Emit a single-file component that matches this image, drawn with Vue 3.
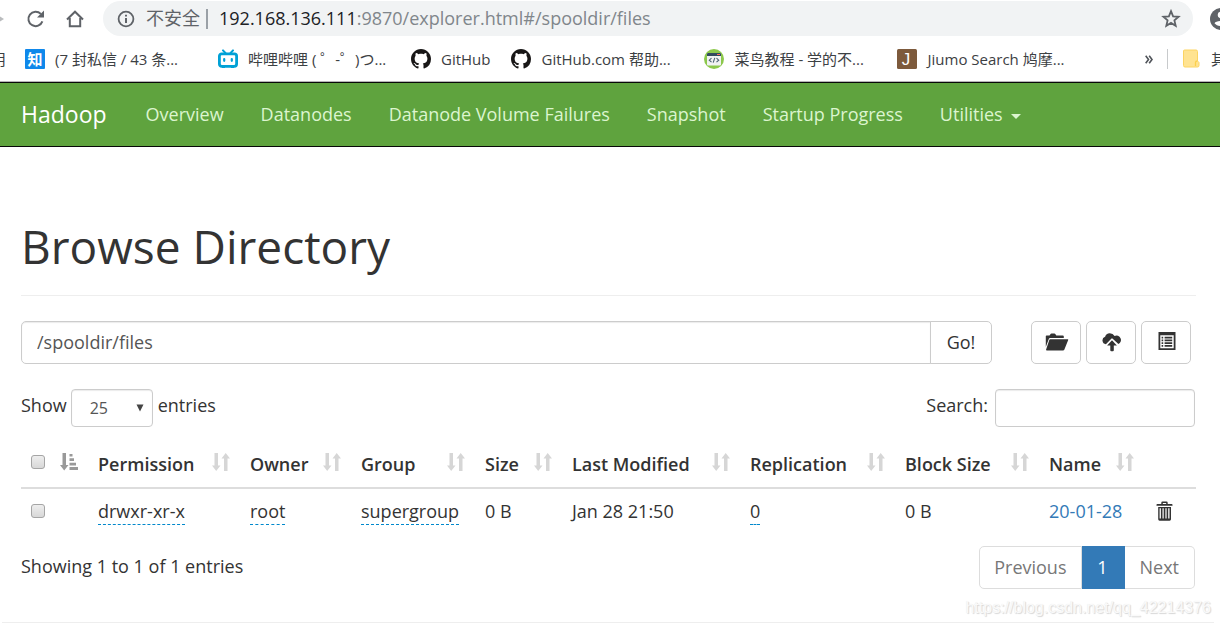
<script setup>
import { ref } from 'vue'

const bookmarks = [
  { icon: 'zhihu', label: '(7 封私信 / 43 条...', long: true },
  { icon: 'bilibili', label: '哔哩哔哩 ( ゜-゜)つ...', long: true },
  { icon: 'github', label: 'GitHub', long: false },
  { icon: 'github', label: 'GitHub.com 帮助...', long: true },
  { icon: 'runoob', label: '菜鸟教程 - 学的不...', long: true },
  { icon: 'jiumo', label: 'Jiumo Search 鸠摩...', long: true },
]
const navLinks = ['Overview', 'Datanodes', 'Datanode Volume Failures', 'Snapshot', 'Startup Progress']
const columns = ['Permission', 'Owner', 'Group', 'Size', 'Last Modified', 'Replication', 'Block Size', 'Name']
const directory = ref('/spooldir/files')
const pageSize = ref('25')
const query = ref('')
</script>

<template>
  <div class="page">
    <header class="browser">
      <div class="toolbar">
        <svg class="forward" width="5" height="16" viewBox="0 0 5 16"><path d="M-4 3 L4 8 L-4 13Z" fill="#babcbe" /></svg>
        <button class="tool reload" aria-label="Reload">
          <svg width="20" height="20" viewBox="0 0 20 20"><path d="M16.4 12.4A7.2 7.2 0 1 1 14.8 4.9" fill="none" stroke="#5f6368" stroke-width="2" /><path d="M18 1.5V8.5H11Z" fill="#5f6368" /></svg>
        </button>
        <button class="tool" aria-label="Home">
          <svg width="20" height="20" viewBox="0 0 20 20"><path d="M2 10.5 10 2.7 18 10.5M4.8 9V17.2H15.2V9" fill="none" stroke="#5f6368" stroke-width="2" /></svg>
        </button>
        <div class="omnibox">
          <svg width="18" height="18" viewBox="0 0 18 18"><circle cx="9" cy="9" r="7.4" fill="none" stroke="#5f6368" stroke-width="1.8" /><path d="M9 8V13M9 4.8V6.6" stroke="#5f6368" stroke-width="2" /></svg>
          <span class="insecure">不安全</span>
          <span class="divider"></span>
          <span class="url"><b>192.168.136.111</b>:9870/explorer.html#/spooldir/files</span>
          <button class="star" aria-label="Bookmark this page">
            <svg width="20" height="20" viewBox="0 0 20 20"><path d="M10 2.2 12.1 7.4 17.6 7.8 13.4 11.4 14.7 16.8 10 13.9 5.3 16.8 6.6 11.4 2.4 7.8 7.9 7.4Z" fill="none" stroke="#5f6368" stroke-width="1.8" /></svg>
          </button>
        </div>
        <div class="profile">
          <svg width="22" height="22" viewBox="0 0 22 22"><circle cx="11" cy="11" r="11" fill="#5f6368" /><circle cx="11" cy="7" r="3.3" fill="#fff" /><path d="M4.5 15.2C6 12.2 16 12.2 17.5 15.2 14.5 19 7.5 19 4.5 15.2Z" fill="#fff" /></svg>
        </div>
      </div>
      <nav class="bookmarks" aria-label="Bookmarks">
        <span class="cut-start"><span>用</span></span>
        <a v-for="mark in bookmarks" :key="mark.label" class="bookmark" href="#">
          <svg v-if="mark.icon === 'zhihu'" width="20" height="20" viewBox="0 0 20 20"><rect width="20" height="20" rx="1" fill="#0f88eb" /><text x="10" y="15.5" text-anchor="middle" class="zhi">知</text></svg>
          <svg v-else-if="mark.icon === 'bilibili'" width="20" height="20" viewBox="0 0 20 20"><rect x="1.4" y="4.9" width="17.2" height="12.4" rx="2.2" fill="none" stroke="#00a1d6" stroke-width="2.8" /><path d="M5 1.4 7.4 4M15 1.4 12.6 4" stroke="#00a1d6" stroke-width="2" stroke-linecap="round" /><path d="M6.2 10V11.8M13.8 10V11.8" stroke="#00a1d6" stroke-width="2.2" stroke-linecap="round" /><path d="M4 17.5H7V19H4ZM13 17.5H16V19H13Z" fill="#00a1d6" /></svg>
          <svg v-else-if="mark.icon === 'github'" width="20" height="20" viewBox="0 0 16 16"><path fill="#191717" d="M8 0C3.58 0 0 3.58 0 8c0 3.54 2.29 6.53 5.47 7.59.4.07.55-.17.55-.38 0-.19-.01-.82-.01-1.49-2.01.37-2.53-.49-2.69-.94-.09-.23-.48-.94-.82-1.13-.28-.15-.68-.52-.01-.53.63-.01 1.08.58 1.23.82.72 1.21 1.87.87 2.33.66.07-.52.28-.87.51-1.07-1.78-.2-3.64-.89-3.64-3.95 0-.87.31-1.59.82-2.15-.08-.2-.36-1.02.08-2.12 0 0 .67-.21 2.2.82.64-.18 1.32-.27 2-.27s1.36.09 2 .27c1.53-1.04 2.2-.82 2.2-.82.44 1.1.16 1.92.08 2.12.51.56.82 1.27.82 2.15 0 3.07-1.87 3.75-3.65 3.95.29.25.54.73.54 1.48 0 1.07-.01 1.93-.01 2.2 0 .21.15.46.55.38A8.01 8.01 0 0 0 16 8c0-4.42-3.58-8-8-8Z" /></svg>
          <svg v-else-if="mark.icon === 'runoob'" width="20" height="20" viewBox="0 0 20 20"><circle cx="10" cy="10" r="10" fill="#8cc84b" /><rect x="3" y="4" width="14" height="12.5" rx="1" fill="#f1f2f2" /><path d="M3 7V5Q3 4 4 4H16Q17 4 17 5V7Z" fill="#324a5e" /><path d="M13 5.5H16" stroke="#ff7058" stroke-width="1" /><path d="M7.5 9.2 5.3 11.2 7.5 13.2M12.5 9.2 14.7 11.2 12.5 13.2M10.8 8.8 9.2 13.6" fill="none" stroke="#4b6072" stroke-width="1.1" /></svg>
          <svg v-else width="20" height="20" viewBox="0 0 20 20"><rect width="20" height="20" rx="1.5" fill="#7d5a3c" /><text x="9" y="16" text-anchor="middle" class="jay">J</text></svg>
          <span class="mark-label" :class="{ long: mark.long }">{{ mark.label }}</span>
        </a>
        <button class="more" aria-label="More bookmarks"><svg width="8" height="9" viewBox="0 0 8 9"><path d="M.7.8 3.5 4.5.7 8.2M4.2.8 7 4.5 4.2 8.2" fill="none" stroke="#50545a" stroke-width="1.6" /></svg></button>
        <span class="mark-divider"></span>
        <a class="other" href="#">
          <svg width="17" height="20" viewBox="0 0 17 20"><path d="M1.5 1H13Q14.5 1 14.5 2.5V12L16 13.5V16.5Q16 18 14.5 18H2Q.5 18 .5 16.5V2Q.5 1 1.5 1Z" fill="#ffe391" stroke="#fcd462" /><path d="M12.5 17V13.5Q12.5 12 14.3 12" fill="none" stroke="#fcd04c" stroke-width="1.3" /></svg>
          <span>其他书签</span>
        </a>
      </nav>
    </header>

    <nav class="navbar" aria-label="Main">
      <a class="brand" href="#">Hadoop</a>
      <a v-for="link in navLinks" :key="link" class="nav-link" href="#">{{ link }}</a>
      <a class="nav-link" href="#">Utilities<i class="caret"></i></a>
    </nav>

    <main>
      <h1>Browse Directory</h1>
      <div class="path-row">
        <form class="path" @submit.prevent>
          <input v-model="directory" type="text" aria-label="Directory path" />
          <button>Go!</button>
        </form>
        <div class="actions">
          <button aria-label="Create directory">
            <svg width="24" height="18" viewBox="0 0 24 18"><path d="M.8 14V3.2Q.8 2.4 1.6 2.4H4.5L5.8.8Q6.1.5 6.6.5H9.5Q10 .5 10.3.9L11.3 2.4H17.8Q18.8 2.4 18.8 3.4V5H5Q4.2 5 3.9 5.8Z" fill="#333" /><path d="M5.2 6.3H22.8Q23.4 6.3 23.2 6.9L19.4 16.4Q19 17.4 18 17.4H1.6Q.8 17.4 1.1 16.6L4.3 6.9Q4.5 6.3 5.2 6.3Z" fill="#333" /></svg>
          </button>
          <button aria-label="Upload files">
            <svg width="20" height="20" viewBox="0 0 20 20"><path d="M3.9 12.2A3.8 3.8 0 0 1 3.1 4.8 4.8 4.8 0 0 1 7.7 1.3 5.6 5.6 0 0 1 12.6 4 4.2 4.2 0 0 1 16.4 12.1L10.7 6.7Q10 6 9.3 6.7Z" fill="#333" /><path d="M10 8.3 14.9 13.4H11.8V18.2Q11.8 19.2 10.8 19.2H9.3Q8.3 19.2 8.3 18.2V13.4H5.1Z" fill="#333" /></svg>
          </button>
          <button aria-label="Cut and paste">
            <svg width="18" height="20" viewBox="0 0 18 20"><path fill-rule="evenodd" d="M.5 0H17.5V18H.5ZM2.3 3.3V16.3H15.7V3.3Z" fill="#333" /><path d="M3.6 5.7H5.2M3.6 8.4H5.2M3.6 11.1H5.2M3.6 13.8H5.2M6.6 5.7H14.2M6.6 8.4H14.2M6.6 11.1H14.2M6.6 13.8H14.2" stroke="#333" stroke-width="1.7" /></svg>
          </button>
        </div>
      </div>

      <div class="filters">
        <label class="length">Show
          <span class="select-box">
            <select v-model="pageSize"><option>25</option><option>50</option><option>100</option></select>
            <svg width="8" height="8" viewBox="0 0 8 8"><path d="M.5.5H7.5L4 7.5Z" fill="#444" /></svg>
          </span>
          entries</label>
        <label class="search">Search:<input v-model="query" type="search" /></label>
      </div>

      <table>
        <colgroup>
          <col class="w-check" /><col class="w-permission" /><col class="w-owner" /><col class="w-group" /><col class="w-size" />
          <col class="w-modified" /><col class="w-replication" /><col class="w-block" /><col class="w-name" /><col class="w-trash" />
        </colgroup>
        <thead>
          <tr>
            <th>
              <div class="head">
                <input type="checkbox" aria-label="Select all" />
                <svg width="18" height="18" viewBox="0 0 18 18"><path d="M2.5 0H6V12H8.5L4.2 17.5 0 12H2.5Z" fill="#999" /><path d="M9.5 1H12.5V3.5H9.5ZM9.5 5.3H14V8H9.5ZM9.5 9.7H16V12.4H9.5ZM9.5 14H18V17H9.5Z" fill="#999" /></svg>
              </div>
            </th>
            <th v-for="name in columns" :key="name">
              <div class="head">
                <span>{{ name }}</span>
                <svg width="18" height="18" viewBox="0 0 18 18"><path d="M2.5 0H6V12.5H8.5L4.2 18 0 12.5H2.5ZM12 18V5.5H9.5L13.7 0 18 5.5H15.5V18Z" fill="#d6d6d6" /></svg>
              </div>
            </th>
            <th></th>
          </tr>
        </thead>
        <tbody>
          <tr>
            <td><div class="head"><input type="checkbox" aria-label="Select 20-01-28" /></div></td>
            <td><span class="editable">drwxr-xr-x</span></td>
            <td><span class="editable">root</span></td>
            <td><span class="editable">supergroup</span></td>
            <td>0 B</td>
            <td>Jan 28 21:50</td>
            <td><span class="editable">0</span></td>
            <td>0 B</td>
            <td><a class="file" href="#">20-01-28</a></td>
            <td>
              <button class="trash" aria-label="Delete 20-01-28">
                <svg width="17" height="20" viewBox="0 0 17 20"><path d="M.5 4.8V3.8Q.5 3 1.3 3H5.3V1.8Q5.3.5 6.6.5H10.4Q11.7.5 11.7 1.8V3H15.7Q16.5 3 16.5 3.8V4.8ZM6.8 3H10.2V1.9H6.8Z" fill="#333" fill-rule="evenodd" /><path d="M2.2 6H15V18.3Q15 19.7 13.6 19.7H3.6Q2.2 19.7 2.2 18.3ZM3.6 7.3V17.5H4.9V7.3ZM6.5 7.3V17.5H7.7V7.3ZM9.4 7.3V17.5H10.6V7.3ZM12.2 7.3V17.5H13.5V7.3Z" fill="#333" fill-rule="evenodd" /></svg>
              </button>
            </td>
          </tr>
        </tbody>
      </table>

      <div class="foot">
        <span>Showing 1 to 1 of 1 entries</span>
        <div class="pager">
          <button>Previous</button>
          <button class="active">1</button>
          <button>Next</button>
        </div>
      </div>
    </main>
    <hr />
    <div class="watermark">https://blog.csdn.net/qq_42214376</div>
  </div>
</template>

<style>
body {
  margin: 0;
  background: #fff;
}
</style>

<style scoped>
.page {
  position: relative;
  overflow: hidden;
  color: #333;
  font: 18px/25px "Open Sans", "Noto Sans CJK SC", sans-serif;
}
.page * {
  box-sizing: border-box;
}
svg {
  display: block;
  flex: none;
}
button,
input,
select {
  margin: 0;
  padding: 0;
  border: 0;
  background: none;
  color: inherit;
  font: inherit;
}
a {
  color: inherit;
  text-decoration: none;
}
.browser {
  border-bottom: 1px solid #b4b5b6;
}
.toolbar {
  display: flex;
  align-items: center;
  height: 37px;
}
.forward {
  margin-right: 21px;
}
.tool {
  margin-right: 19px;
}
.tool + .omnibox {
  margin-left: -1px;
}
.omnibox {
  display: flex;
  flex: 1;
  align-items: center;
  height: 35px;
  padding: 0 12px 0 14px;
  border-radius: 18px;
  background: #f1f3f4;
  color: #80868b;
  white-space: nowrap;
}
.insecure {
  margin-left: 11px;
  color: #5f6368;
}
.divider {
  width: 2px;
  height: 20px;
  margin: 0 11px 0 6px;
  background: #9aa0a6;
}
.url {
  flex: 1;
}
.url b {
  color: #202124;
  font-weight: 400;
}
.profile {
  width: 27px;
  padding-left: 17px;
  overflow: hidden;
}
.bookmarks {
  display: flex;
  align-items: center;
  height: 44px;
  color: #3c4043;
  font-size: 15px;
  white-space: nowrap;
  overflow: hidden;
}
.cut-start {
  display: flex;
  justify-content: flex-end;
  width: 6px;
  margin-right: 19px;
  overflow: hidden;
}
.bookmark {
  display: flex;
  gap: 10px;
  align-items: center;
  margin-right: 21px;
}
.long {
  width: 142px;
}
.zhi {
  fill: #fff;
  font: 700 15px "Noto Sans CJK SC", sans-serif;
}
.jay {
  fill: #fff;
  font: 17px "Liberation Sans", sans-serif;
}
.more {
  margin-left: auto;
}
.mark-divider {
  width: 1px;
  height: 20px;
  margin: 0 15px 0 14px;
  background: #c8cacc;
}
.other {
  display: flex;
  gap: 11px;
  align-items: center;
  width: 37px;
}
.navbar {
  display: flex;
  align-items: center;
  height: 65px;
  padding-left: 21px;
  border: 1px solid #080808;
  border-width: 1px 0;
  background: #5fa33e;
  color: #dcf5cf;
  white-space: nowrap;
}
.brand {
  margin-right: 39px;
  color: #fff;
  font-size: 23px;
}
.nav-link {
  display: flex;
  align-items: center;
  margin-right: 37px;
}
.caret {
  margin: 4px 0 0 8px;
  border: 5px solid transparent;
  border-top-color: currentColor;
  border-bottom: 0;
}
main {
  padding: 72px 24px 0 21px;
}
h1 {
  margin: 0 0 25px;
  padding-bottom: 21px;
  border-bottom: 1px solid #eee;
  font-size: 46px;
  font-weight: 400;
  line-height: 55px;
}
.path-row {
  display: flex;
  gap: 39px;
  padding-right: 5px;
}
.path {
  display: flex;
  flex: 1;
}
.path input,
.search input,
select {
  border: 1px solid #ccc;
  background: #fff;
  box-shadow: inset 0 1px 1px rgba(0, 0, 0, 0.08);
  color: #555;
}
.path input {
  flex: 1;
  min-width: 0;
  height: 43px;
  padding: 0 15px 2px;
  border-radius: 5px 0 0 5px;
}
.path button {
  width: 62px;
  margin-left: -1px;
  border: 1px solid #ccc;
  border-radius: 0 5px 5px 0;
}
.actions {
  display: flex;
  gap: 5px;
}
.actions button {
  display: grid;
  place-items: center;
  width: 50px;
  height: 43px;
  padding: 0 0 2px 2px;
  border: 1px solid #ccc;
  border-radius: 5px;
}
.filters {
  display: flex;
  justify-content: space-between;
  margin-top: 25px;
  padding-right: 1px;
}
.length,
.search {
  display: flex;
  line-height: 33px;
}
.select-box {
  position: relative;
  margin: 0 5px 0 4px;
}
.select-box svg {
  position: absolute;
  top: 15px;
  right: 9px;
  pointer-events: none;
}
select {
  display: block;
  width: 82px;
  height: 38px;
  padding: 0 18px;
  border-radius: 4px;
  font-size: 16px;
  appearance: none;
}
.search input {
  width: 200px;
  height: 38px;
  margin-left: 7px;
  padding: 0 10px;
  border-radius: 4px;
}
table {
  width: 100%;
  margin-top: 13px;
  border-collapse: collapse;
  table-layout: fixed;
}
.w-check { width: 67px; }
.w-permission { width: 152px; }
.w-owner { width: 111px; }
.w-group { width: 124px; }
.w-size { width: 87px; }
.w-modified { width: 178px; }
.w-replication { width: 155px; }
.w-block { width: 144px; }
.w-name { width: 105px; }
.w-trash { width: 52px; }
th,
td {
  padding: 0 10px;
  text-align: left;
  white-space: nowrap;
}
th {
  height: 48px;
  padding-top: 2px;
  border-bottom: 2px solid #ddd;
  font-weight: 600;
}
td {
  height: 45px;
}
.head {
  display: flex;
  align-items: center;
  justify-content: space-between;
}
.head svg,
th input[type="checkbox"] {
  margin-bottom: 5px;
}
input[type="checkbox"] {
  width: 14px;
  height: 14px;
  border: 1px solid #a5a5a5;
  border-radius: 3px;
  background: linear-gradient(#eee, #d8d8d8);
  appearance: none;
}
.editable {
  padding-bottom: 1px;
  border-bottom: 1px dashed #0088cc;
}
.file {
  color: #337ab7;
}
.trash {
  display: block;
  margin-left: 2px;
}
.foot {
  display: flex;
  justify-content: space-between;
  margin-top: 13px;
  padding-right: 1px;
  line-height: 41px;
}
.pager {
  display: flex;
  height: 43px;
  color: #777;
}
.pager button {
  padding: 0 15px;
  border: 1px solid #ddd;
  border-left: 0;
}
.pager button:first-child {
  padding: 0 14px;
  border-left: 1px solid #ddd;
  border-radius: 5px 0 0 5px;
}
.pager button:last-child {
  border-radius: 0 5px 5px 0;
}
.pager .active {
  width: 43px;
  border-color: #337ab7;
  background: #337ab7;
  color: #fff;
}
hr {
  margin: 33px 6px 3px 2px;
  border: 0;
  border-top: 1px solid #eee;
}
.watermark {
  position: absolute;
  right: 9px;
  bottom: 8px;
  color: #fafafa;
  font: 16px/20px "Liberation Sans", Arial, sans-serif;
  text-shadow: 1px 1px 1px #d6d6d6, 0 0 1px #e8e8e8;
}
</style>
